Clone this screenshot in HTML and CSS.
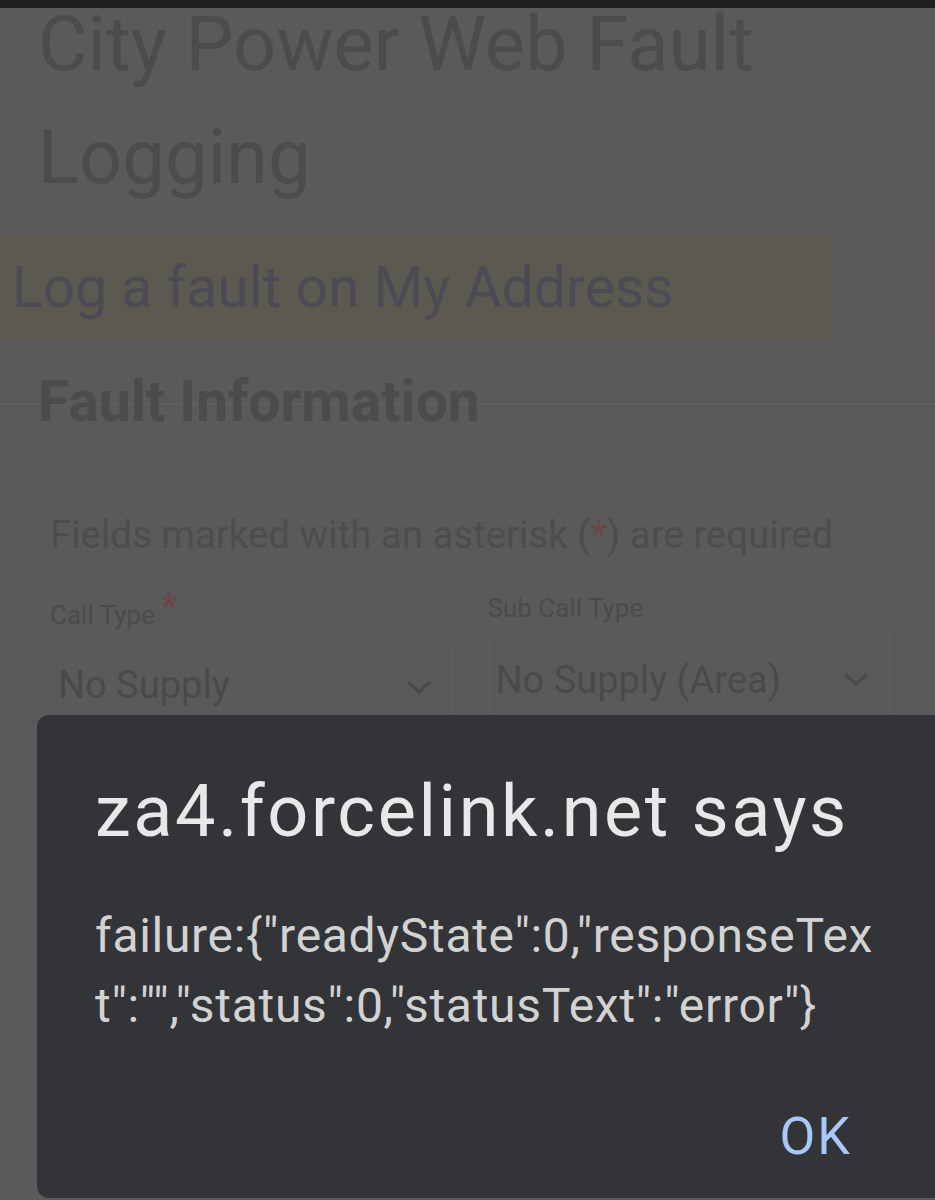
FILE: index.html
```html
<!DOCTYPE html>
<html>
<head>
<meta charset="utf-8">
<link rel="stylesheet" href="styles.css">
</head>
<body>
<div class="statusbar"></div>
<div class="page">
  <h1 class="title">City Power Web Fault Logging</h1>
  <div class="band">
    <div class="band-main">Log a fault on My Address</div>
    <div class="band-rest"></div>
  </div>
  <div class="section">
    <h2 class="section-title">Fault Information</h2>
    <p class="note">Fields marked with an asterisk (<span class="req">*</span>) are required</p>
    <div class="fields">
      <div class="field field-a">
        <label class="label">Call Type <span class="req star">*</span></label>
        <div class="select select-a">
          <span class="value">No Supply</span>
          <svg class="chev" width="26" height="14" viewBox="0 0 26 14"><path d="M2 2 L13 12 L24 2" fill="none" stroke="#4a4a4a" stroke-width="3.5"/></svg>
        </div>
      </div>
      <div class="field field-b">
        <label class="label">Sub Call Type</label>
        <div class="select select-b">
          <span class="value">No Supply (Area)</span>
          <svg class="chev" width="26" height="14" viewBox="0 0 26 14"><path d="M2 2 L13 12 L24 2" fill="none" stroke="#4a4a4a" stroke-width="3.5"/></svg>
        </div>
      </div>
    </div>
  </div>
</div>
<div class="dialog">
  <div class="dialog-title">za4.forcelink.net says</div>
  <div class="dialog-msg">failure:{"readyState":0,"responseText":"","status":0,"statusText":"error"}</div>
  <div class="dialog-actions"><span class="ok">OK</span></div>
</div>
</body>
</html>
```
FILE: styles.css
```css
html, body {
  margin: 0;
  padding: 0;
}
body {
  width: 935px;
  height: 1200px;
  overflow: hidden;
  background: #5a5a5a;
  font-family: Roboto, "Liberation Sans", sans-serif;
  position: relative;
}
.statusbar {
  height: 8px;
  background: #1e1e1e;
}
.page {
  color: #4c4c4c;
}
.title {
  margin: -20px 0 0 38px;
  font-size: 76px;
  line-height: 113px;
  font-weight: 400;
  color: #4c4c4c;
  width: 800px;
}
.band {
  display: flex;
  margin-top: 21px;
  height: 106px;
}
.band-main {
  width: 820px;
  padding-left: 12px;
  background: #5c5a50;
  color: #4b4b55;
  font-size: 57px;
  line-height: 106px;
  white-space: nowrap;
}
.band-rest {
  flex: 1;
  background: #5b5a58;
  border-right: 4px solid #5f5a5a;
}
.section {
  border-top: 2px solid #5f5f5f;
  margin-top: 62px;
  padding: 0 45px 0 38px;
}
.section-title {
  margin: -38px 0 0 0;
  font-size: 57px;
  line-height: 70px;
  font-weight: 700;
  color: #4c4c4c;
}
.note {
  margin: 78px 0 0 12px;
  font-size: 38.4px;
  line-height: 40px;
  color: #4d4d4d;
  white-space: nowrap;
}
.req {
  color: #6e4444;
}
.fields {
  display: flex;
  align-items: flex-start;
  gap: 35px;
  margin: 36px 0 0 12px;
}
.field {
  flex: 1;
  display: flex;
  flex-direction: column;
}
.field-a {
  padding-top: 5px;
}
.label {
  font-size: 26px;
  line-height: 34px;
  height: 34px;
  color: #4b4b4b;
  white-space: nowrap;
}
.star {
  font-size: 36px;
  line-height: 20px;
  vertical-align: 6px;
}
.select {
  border: 1px solid #5f5f5f;
  display: flex;
  align-items: flex-start;
  justify-content: space-between;
  padding: 0 20px 0 7px;
  box-sizing: border-box;
}
.select-a {
  margin-top: 12px;
  height: 80px;
}
.select-b {
  margin-top: 8px;
  height: 90px;
}
.value {
  font-size: 38px;
  line-height: 44px;
  color: #4a4a4a;
}
.select-a .value {
  margin-top: 20px;
}
.select-a .chev {
  margin-top: 37px;
}
.select-b .value {
  margin-top: 24px;
}
.select-b .chev {
  margin-top: 38px;
}
.dialog {
  position: absolute;
  left: 37px;
  top: 715px;
  width: 950px;
  height: 483px;
  background: #333437;
  border-radius: 12px;
  box-sizing: border-box;
  padding: 57px 0 0 58px;
  color: #e8e8e8;
}
.dialog-title {
  font-size: 72px;
  line-height: 80px;
  letter-spacing: 2.6px;
  white-space: nowrap;
}
.dialog-msg {
  width: 788px;
  margin-top: 49px;
  font-size: 48px;
  line-height: 70px;
  letter-spacing: 0.7px;
  color: #d2d2d2;
  word-break: break-all;
}
.dialog-actions {
  width: 757px;
  display: flex;
  justify-content: flex-end;
  margin-top: 68px;
}
.ok {
  font-size: 52px;
  line-height: 56px;
  color: #a8c7fa;
  font-weight: 400;
  letter-spacing: 2px;
}
```
